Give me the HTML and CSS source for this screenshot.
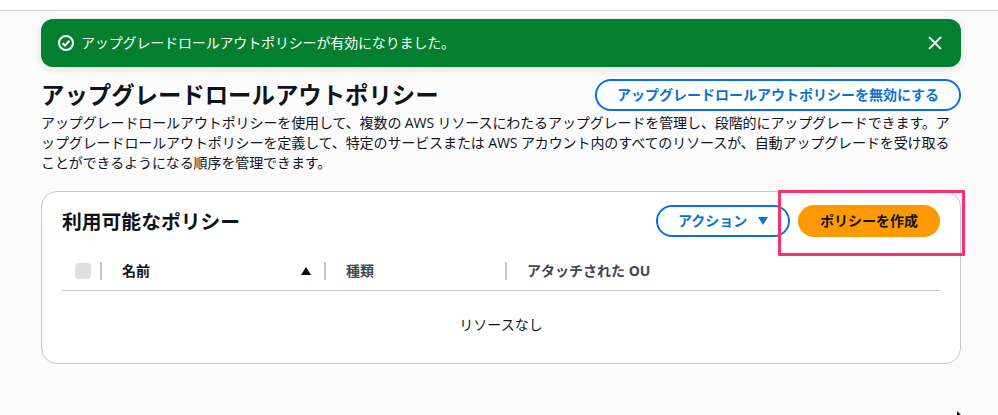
FILE: index.html
```html
<!DOCTYPE html>
<html lang="ja">
<head>
<meta charset="utf-8">
<title>アップグレードロールアウトポリシー</title>
<link rel="stylesheet" href="styles.css">
</head>
<body>
<div class="topbar"></div>
<main class="page">
  <div class="flash">
    <svg class="flash-icon" width="16" height="16" viewBox="0 0 16 16" fill="none" stroke="#fff" stroke-width="2"><circle cx="8" cy="8" r="7"/><path d="M4.6 8.2l2.4 2.4 4.4-4.8"/></svg>
    <span class="flash-text">アップグレードロールアウトポリシーが有効になりました。</span>
    <svg class="flash-close" width="16" height="16" viewBox="0 0 16 16" fill="none" stroke="#e9ebed" stroke-width="2"><path d="M2 2l12 12M14 2L2 14"/></svg>
  </div>
  <div class="head">
    <h1>アップグレードロールアウトポリシー</h1>
    <button class="btn btn-normal btn-disable">アップグレードロールアウトポリシーを無効にする</button>
  </div>
  <p class="desc">アップグレードロールアウトポリシーを使用して、複数の AWS リソースにわたるアップグレードを管理し、段階的にアップグレードできます。アップグレードロールアウトポリシーを定義して、特定のサービスまたは AWS アカウント内のすべてのリソースが、自動アップグレードを受け取ることができるようになる順序を管理できます。</p>
  <section class="card">
    <div class="card-head">
      <h2>利用可能なポリシー</h2>
      <div class="actions">
        <button class="btn btn-normal btn-action">アクション<svg width="10" height="8" viewBox="0 0 10 8"><path d="M0 0h10L5 8z" fill="#0972d3"/></svg></button>
        <button class="btn btn-primary">ポリシーを作成</button>
      </div>
    </div>
    <div class="thead">
      <div class="th th-check"><span class="check"></span></div>
      <div class="th th-name">名前<svg width="10" height="8" viewBox="0 0 10 8"><path d="M0 8h10L5 0z" fill="#000716"/></svg></div>
      <div class="th th-type">種類</div>
      <div class="th th-ou">アタッチされた OU</div>
    </div>
    <div class="empty">リソースなし</div>
  </section>
</main>
<div class="highlight"></div>
<svg class="cursor" width="8" height="5" viewBox="0 0 8 5"><path d="M0 0l5 5H0z" fill="#111"/></svg>
</body>
</html>
```
FILE: styles.css
```css
* { box-sizing: border-box; }
html, body { margin: 0; height: 100%; }
body {
  background: #fbfbfc;
  color: #000716;
  font-family: "Open Sans", "Noto Sans CJK JP", sans-serif;
  font-size: 14px;
  line-height: 20px;
  overflow: hidden;
  position: relative;
}
.topbar { height: 11px; background: #fff; border-bottom: 1px solid #d1d5db; }
.page { width: 920px; margin-left: 41px; padding-top: 8px; }
.flash {
  height: 48px;
  background: #037f2f;
  border-radius: 12px;
  box-shadow: 0 2px 8px rgba(0, 7, 22, .12);
  color: #fff;
  display: flex;
  align-items: center;
  padding: 0 18px 0 17px;
}
.flash-text { margin-left: 7px; flex: 1; letter-spacing: -.15px; }
.head { display: flex; justify-content: space-between; margin-top: 12px; height: 32px; }
h1 { margin: 0; font-size: 23.4px; line-height: 32px; font-weight: 700; color: #0f141a; }
.btn {
  font-family: inherit;
  font-size: 14px;
  font-weight: 700;
  line-height: 20px;
  border-radius: 20px;
  height: 32px;
  padding: 0;
  background: #fff;
  cursor: pointer;
}
.btn-normal { border: 2px solid #0972d3; color: #0972d3; }
.btn-disable { width: 366px; }
.btn-action { width: 134px; display: flex; align-items: center; gap: 11px; padding-left: 20px; }
.btn-primary { width: 142px; background: #ff9900; border: 0; color: #0f141a; }
.desc { margin: 2px 0 0; color: #0f141a; letter-spacing: -.1px; }
.card {
  margin-top: 18px;
  height: 173px;
  background: #fff;
  border: 1px solid #c6c6cd;
  border-radius: 16px;
  padding: 13px 20px 0;
}
.card-head { display: flex; justify-content: space-between; align-items: center; height: 32px; }
h2 { margin: 1px 0 0; font-size: 19.8px; line-height: 24px; font-weight: 700; color: #0f141a; }
.actions { display: flex; gap: 8px; }
.thead {
  display: flex;
  align-items: center;
  height: 36px;
  margin-top: 18px;
  padding-bottom: 3px;
  border-bottom: 1px solid #c6c6cd;
  font-size: 14px;
  font-weight: 700;
  color: #424650;
}
.th { position: relative; height: 18px; display: flex; align-items: center; }
.th-check { width: 40px; padding-left: 13px; border-right: 2px solid #c6c6cd; }
.check { width: 16px; height: 16px; border-radius: 4px; background: #dedee3; }
.th-name { width: 224px; padding-left: 20px; justify-content: space-between; padding-right: 13px; border-right: 2px solid #c6c6cd; color: #0f141a; }
.th-type { width: 181px; padding-left: 20px; border-right: 2px solid #c6c6cd; }
.th-ou { padding-left: 20px; flex: 1; }
.empty { text-align: center; margin-top: 24px; color: #0f141a; }
.highlight {
  position: absolute;
  left: 778px;
  top: 190px;
  width: 187px;
  height: 66px;
  border: 3px solid #ff2e6f;
  border-radius: 1px;
}
.cursor { position: absolute; left: 957px; top: 411px; }
```
